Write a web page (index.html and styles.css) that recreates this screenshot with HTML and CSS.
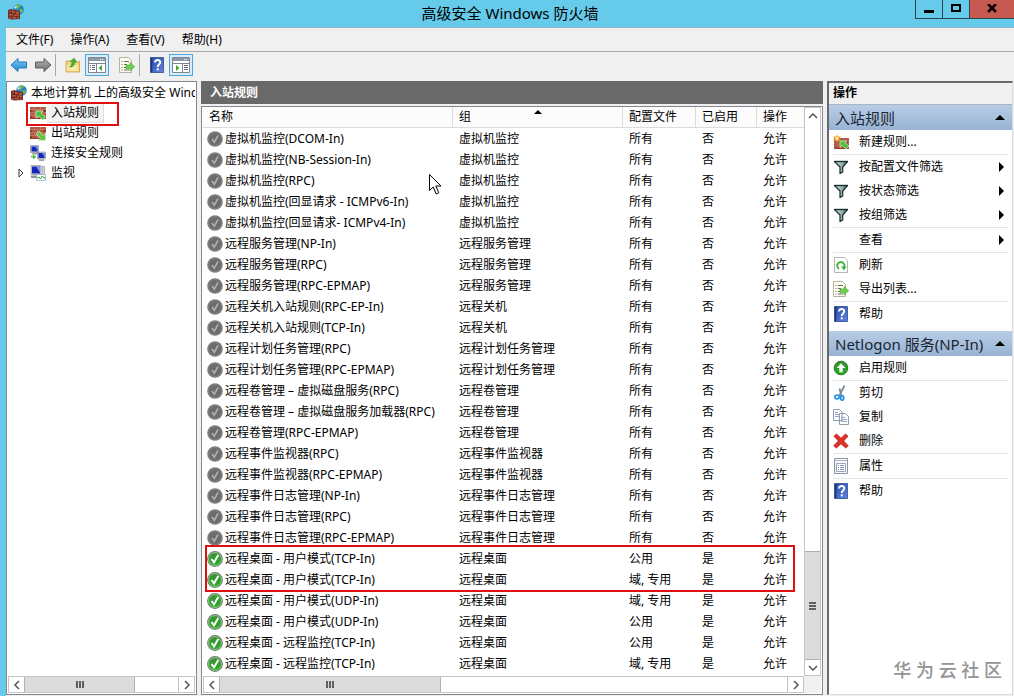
FILE: index.html
```html
<!DOCTYPE html>
<html lang="zh-CN">
<head>
  <meta charset="UTF-8" />
  <meta name="viewport" content="width=device-width, initial-scale=1" />
  <title>高级安全 Windows 防火墙</title>
  <link rel="stylesheet" href="styles.css">
</head>
<body>
  <!-- Icon sprite -->
  <svg class="sprite" aria-hidden="true">
    <defs>
      <linearGradient id="gBlue" x1="0" y1="0" x2="0" y2="1"><stop offset="0" stop-color="#7fd0f5"/><stop offset="1" stop-color="#1581cf"/></linearGradient>
      <linearGradient id="gGray" x1="0" y1="0" x2="0" y2="1"><stop offset="0" stop-color="#b5b5b5"/><stop offset="1" stop-color="#6e6e6e"/></linearGradient>
      <linearGradient id="gHelp" x1="0" y1="0" x2="1" y2="1"><stop offset="0" stop-color="#2b4aa8"/><stop offset="1" stop-color="#5f86e0"/></linearGradient>
      <linearGradient id="gGreen" x1="0" y1="0" x2="0" y2="1"><stop offset="0" stop-color="#3f8c3a"/><stop offset="1" stop-color="#22ad1c"/></linearGradient>
      <linearGradient id="gFunnel" x1="0" y1="0" x2="1" y2="0"><stop offset="0" stop-color="#e3f1f1"/><stop offset="1" stop-color="#4f7e80"/></linearGradient>
    </defs>
    <symbol id="bricks" viewBox="0 0 16 12">
      <path fill="#8f3b28" d="M0 0h16v12H0z"/>
      <path fill="#b5583f" d="M0 0h4v2H0zM5 0h5v2H5zM11 0h5v2h-5zM2 3h5v2H2zM8 3h5v2H8zM0 6h4v2H0zM5 6h5v2H5zM11 6h5v2h-5zM2 9h5v2H2zM8 9h5v2H8z"/>
      <path fill="none" stroke="#d6a595" stroke-width=".6" d="M0 2.5h16M0 5.5h16M0 8.5h16M4.5 0v2.5M10.5 0v2.5M7.5 3v2.500M4.5 6v2.500M10.5 6v2.500M7.5 9v2.500"/>
    </symbol>
    <symbol id="firewall" viewBox="0 0 16 16">
      <circle cx="10.5" cy="5.5" r="5.3" fill="#2d7fc4"/>
      <path fill="#6cc04a" d="M8 1.200c2-1 4-.7 5 .5l-2 1.500-1 2-2-1zM12 5l3 .5-1 3.500-2-1z"/>
      <path fill="#bfe6fb" d="M6 3.500l2-2 1 1.500-2 2z"/>
      <path fill="#6f2e22" d="M0 6l3-1 9 2.500V15l-9 .5-3-1z"/>
      <path fill="#b4543c" d="M1 7l2-.6V8H1zM4 6.500l3 .8V9H4zM8 7.600l3 .7V10H8zM1 10h4v1.600H1zM6 10.500h5V12H6zM1 13h2v1.500H1zM4 12.800h4v1.800H4zM9 13h2v1.400H9z"/>
    </symbol>
    <symbol id="inbound" viewBox="0 0 16 16">
      <use href="#bricks" y="2" width="16" height="12"/>
      <path fill="#4cc23a" stroke="#e6f7df" stroke-width=".7" d="M6 6h7l-2 2 4.500 4-3 3L8.500 11 6 13z"/>
    </symbol>
    <symbol id="outbound" viewBox="0 0 16 16">
      <use href="#bricks" y="2" width="16" height="12"/>
      <path fill="#63c63c" stroke="#e6f7df" stroke-width=".7" d="M15.500 15.500H8l2.300-2.300L6 9l3-3 4 4.500 2.500-2.500z"/>
    </symbol>
    <symbol id="newrule" viewBox="0 0 16 16">
      <use href="#bricks" x="1" y="4" width="15" height="11"/>
      <path fill="#4cc23a" stroke="#e6f7df" stroke-width=".6" d="M7 7h7l-2 2 4 3-3 3-3.500-3.500L7 13z"/>
      <path fill="#f7a823" d="M4 0l1 2.800L8 2 6 4.500 8 7 5 6.300 4 9 3 6.300 0 7l2-2.500L0 2l3 .8z"/>
      <circle cx="4" cy="4.5" r="1.4" fill="#fff3b0"/>
    </symbol>
    <symbol id="security" viewBox="0 0 16 16">
      <path fill="#c9cdd6" stroke="#6b7280" stroke-width=".5" d="M.5.500h8v7h-8zM7.500 7h8v7h-8z"/>
      <path fill="#1726b8" d="M1.500 1.500h6v5h-6zM8.500 8h6v5h-6z"/>
      <path fill="#6f8df2" d="M5 1.500h2.500v4zM12 8h2.500v4z"/>
      <path fill="#9aa0aa" d="M2 8h5v1.500H2zM9 14.300h5V16H9z"/>
      <path fill="#5fb944" d="M1 11h5v1.500H1zM3 9.500h1.500V14H3z"/>
    </symbol>
    <symbol id="monitor" viewBox="0 0 16 16">
      <path fill="#d5d8de" stroke="#777" stroke-width=".5" d="M1 .5h10v9H1zM12 1.500h2.500v9H12z"/>
      <path fill="#1726b8" d="M2 1.500h8v7H2z"/>
      <path fill="#7d97f5" d="M6 1.500h4v6z"/>
      <path fill="#8d929c" d="M1 10.500h7V13H1z"/>
      <path fill="#fff" stroke="#7a9cc4" stroke-width=".6" d="M6.500 9.500h9v6h-9z"/>
      <path fill="none" stroke="#35a535" d="M7 13l2-1 1.500 2 2-3 1.500 2h1.500"/>
    </symbol>
    <symbol id="back" viewBox="0 0 18 16">
      <path fill="url(#gBlue)" stroke="#2a79b5" d="M1 8l7-6.500V5h8.500v6H8v3.500z"/>
    </symbol>
    <symbol id="forward" viewBox="0 0 18 16">
      <path fill="url(#gGray)" stroke="#5c5c5c" d="M17 8l-7-6.500V5H1.500v6H10v3.500z"/>
    </symbol>
    <symbol id="folderup" viewBox="0 0 16 16">
      <path fill="#f3d37a" stroke="#c39a3c" stroke-width=".7" d="M1 4h6l1.500 1.500H12L14.500 4v11H1z"/>
      <path fill="#fbe7a6" d="M2 8h11v6H2z"/>
      <path fill="#4fae30" d="M3.500 10c1.500-.3 3-2 3.200-5H4.200L9 .8 12.500 5h-2.300c0 4-3 6-6.700 5z"/>
    </symbol>
    <symbol id="treepane" viewBox="0 0 18 16">
      <path fill="#fff" stroke="#7c8796" d="M.5.500h17v15H.5z"/>
      <path fill="#8c97a8" d="M1 1h16v3H1z"/>
      <path fill="#fff" d="M12 2h1v1h-1zM14 2h1v1h-1z"/>
      <path stroke="#7c8796" d="M.5 6.500h17M8.500 6v10"/>
      <path stroke="#5c6b80" d="M2 8.500h1M4 8.500h3M2 10.500h1M4 10.500h3M2 12.500h1M4 12.500h3"/>
      <path fill="#45a832" d="M14 8v6l-3.500-3z"/>
    </symbol>
    <symbol id="actionpane" viewBox="0 0 18 16">
      <path fill="#fff" stroke="#7c8796" d="M.5.500h17v15H.5z"/>
      <path fill="#8c97a8" d="M1 1h16v3H1z"/>
      <path fill="#fff" d="M12 2h1v1h-1zM14 2h1v1h-1z"/>
      <path stroke="#7c8796" d="M.5 6.500h17M10.500 6v10"/>
      <path stroke="#5c6b80" d="M12 8.500h4M12 10.500h4M12 12.500h4"/>
      <path fill="#45a832" d="M4 8v6l3.500-3z"/>
    </symbol>
    <symbol id="export" viewBox="0 0 16 16">
      <path fill="#fffdf0" stroke="#a2a18c" stroke-width=".8" d="M.5.500h9l3 3v12H.5z"/>
      <path stroke="#6b6b5c" d="M2.500 4.500h1M5 4.500h5M2.500 7.500h1M5 7.500h3M2.500 10.500h1M5 10.500h3M2.500 13h1M5 13h5"/>
      <path fill="#6fd04c" stroke="#3ea52b" stroke-width=".6" d="M7 8h4V5.500l4.700 4.200L11 14v-2.500H7z"/>
    </symbol>
    <symbol id="help" viewBox="0 0 14 16">
      <path fill="url(#gHelp)" stroke="#1e3a86" stroke-width=".7" d="M.5.500h13v15H.5z"/>
      <path fill="#1c367f" d="M.8.800h1.500v14.500H.8z"/>
      <path fill="none" stroke="#fff" stroke-width="1.900" d="M5 5.600C5 2.200 10.200 2.200 10.200 5.300 10.200 7.500 7.700 7.500 7.700 10"/>
      <path fill="#fff" d="M6.700 11.300h2.100v2H6.700z"/>
    </symbol>
    <symbol id="funnel" viewBox="0 0 16 16">
      <path fill="url(#gFunnel)" stroke="#172d30" stroke-width="1.200" stroke-linejoin="round" d="M1.500 2.500h13L9.700 8v5L7 14.500V8z"/>
      <path stroke="#172d30" stroke-width="1.400" d="M1 2.500h14"/>
    </symbol>
    <symbol id="refresh" viewBox="0 0 14 16">
      <path fill="#fff" stroke="#98a898" stroke-width=".8" d="M.5.500h10l3 3v12H.5z"/>
      <path fill="none" stroke="#46b23b" stroke-width="2" d="M5 11.800A3.600 3.600 0 1 1 10 10.500"/>
      <path fill="#46b23b" d="M7 9.500h5.500L10 13.500z"/>
    </symbol>
    <symbol id="enable" viewBox="0 0 16 16">
      <circle cx="8" cy="8" r="6.8" fill="url(#gGreen)" stroke="#267a22"/>
      <path fill="#fff" d="M8 3.300L12.300 8H9.700v4.300H6.300V8H3.700z"/>
    </symbol>
    <symbol id="cut" viewBox="0 0 16 16">
      <path stroke="#7b8a99" stroke-width="1.800" d="M11.500.5L6.500 10.500M6.500 3.500l2 7.500"/>
      <ellipse cx="4" cy="12" rx="2.200" ry="2" fill="#d2ecff" stroke="#1f8fe0" stroke-width="1.600"/>
      <ellipse cx="9.200" cy="13" rx="1.600" ry="2.200" fill="#d2ecff" stroke="#1f8fe0" stroke-width="1.600"/>
    </symbol>
    <symbol id="copy" viewBox="0 0 16 16">
      <path fill="#fff" stroke="#8791a3" stroke-width=".9" d="M.5.500h6L9 3v8.500H.5zM6.500 4.500h6l3 3v8h-9z"/>
      <path stroke="#8ea4c6" d="M2 3.500h3M2 5.500h4M2 7.500h4M8 8.500h4M8 10.500h6M8 12.500h6"/>
    </symbol>
    <symbol id="delete" viewBox="0 0 16 16">
      <path fill="#e4302a" stroke="#b01512" stroke-width=".8" stroke-linejoin="round" d="M1 3.200L3.500 1 8 5.300 12.500 1 15 3.200 10.600 8 15.200 12.700 12.700 15 8 10.700 3.300 15 .8 12.700 5.400 8z"/>
    </symbol>
    <symbol id="props" viewBox="0 0 16 16">
      <path fill="#f7f9fb" stroke="#8b97a6" d="M1.500.500h13v15h-13z"/>
      <path stroke="#a9b4c2" d="M2 2.500h12"/>
      <path fill="#fff" stroke="#9aa6b5" d="M3.500 5.500h9v8h-9z"/>
      <path stroke="#7f93b5" d="M5 7.500h1M7 7.500h4M5 9.500h1M7 9.500h4M5 11.500h1M7 11.500h4"/>
    </symbol>
    <symbol id="rule-on" viewBox="0 0 16 16">
      <circle cx="8" cy="8" r="7.300" fill="url(#gGreen)" stroke="#6f7f6f" stroke-width="1.200"/>
      <circle cx="8" cy="8" r="6.400" fill="none" stroke="#c8e8c2" stroke-width=".6"/>
      <path fill="none" stroke="#fff" stroke-width="2" d="M4.500 8l2.500 3.500L11.300 4"/>
    </symbol>
    <symbol id="rule-off" viewBox="0 0 16 16">
      <circle cx="8" cy="8" r="7.800" fill="#7e7e7e"/>
      <circle cx="8" cy="8" r="6" fill="#6c6c6c"/>
      <path fill="none" stroke="#b0b0b0" stroke-width="1.600" d="M5 8l2.300 3.300L11 4.500"/>
    </symbol>
    <symbol id="chev" viewBox="0 0 10 10">
      <path fill="none" stroke="#555" stroke-width="1.500" d="M7 1L3 5l4 4"/>
    </symbol>
  </svg>

  <div class="window">
    <header class="titlebar">
      <svg class="icon app-icon"><use href="#firewall"/></svg>
      <h1 class="title">高级安全 Windows 防火墙</h1>
      <div class="controls">
        <button class="control" aria-label="最小化"><svg width="10" height="9"><path d="M0 6h10v3H0z"/></svg></button>
        <button class="control" aria-label="最大化"><svg width="10" height="9"><path fill="none" stroke="#000" stroke-width="2" d="M1 1h8v6H1z"/></svg></button>
        <button class="control close" aria-label="关闭"><svg width="10" height="9"><path fill="none" stroke="#000" stroke-width="2.500" d="M1 0l8 8M9 0L1 8"/></svg></button>
      </div>
    </header>

    <nav class="menubar">
      <button>文件(F)</button>
      <button>操作(A)</button>
      <button>查看(V)</button>
      <button>帮助(H)</button>
    </nav>

    <div class="toolbar">
      <button class="tool" aria-label="后退"><svg class="wide"><use href="#back"/></svg></button>
      <button class="tool" aria-label="前进"><svg class="wide"><use href="#forward"/></svg></button>
      <span class="tool-sep"></span>
      <button class="tool" aria-label="上一级"><svg class="icon"><use href="#folderup"/></svg></button>
      <button class="tool pressed" aria-label="显示控制台树"><svg class="wide"><use href="#treepane"/></svg></button>
      <span class="tool-gap"></span>
      <button class="tool" aria-label="导出列表"><svg class="icon"><use href="#export"/></svg></button>
      <span class="tool-sep"></span>
      <button class="tool" aria-label="帮助"><svg class="icon"><use href="#help"/></svg></button>
      <button class="tool pressed" aria-label="显示操作窗格"><svg class="wide"><use href="#actionpane"/></svg></button>
    </div>

    <main class="panes">
      <!-- Console tree -->
      <section class="pane tree-pane">
        <ul class="tree">
          <li class="tree-root"><svg class="icon"><use href="#firewall"/></svg><span>本地计算机 上的高级安全 Wind</span></li>
          <li class="tree-item marked"><span class="twisty"></span><svg class="icon"><use href="#inbound"/></svg><span class="selected">入站规则</span></li>
          <li class="tree-item"><span class="twisty"></span><svg class="icon"><use href="#outbound"/></svg><span>出站规则</span></li>
          <li class="tree-item"><span class="twisty"></span><svg class="icon"><use href="#security"/></svg><span>连接安全规则</span></li>
          <li class="tree-item"><svg class="twisty" viewBox="0 0 8 10"><path fill="#fff" stroke="#333" d="M2 1l4 4-4 4z"/></svg><svg class="icon"><use href="#monitor"/></svg><span>监视</span></li>
        </ul>
        <div class="hscroll">
          <button class="scroll-btn" aria-label="向左"><svg class="chev"><use href="#chev"/></svg></button>
          <div class="hthumb tree-thumb"><i class="grip"></i></div>
          <button class="scroll-btn end" aria-label="向右"><svg class="chev right"><use href="#chev"/></svg></button>
        </div>
      </section>

      <!-- Rule list -->
      <section class="center">
        <h2 class="center-title">入站规则</h2>
        <div class="pane list-pane">
          <div class="list-body">
            <div class="list-view">
              <table class="rules" id="rules">
                <colgroup>
                  <col><col class="col-group"><col class="col-profile"><col class="col-enabled"><col class="col-action">
                </colgroup>
                <thead>
                  <tr><th>名称</th><th class="sorted">组</th><th>配置文件</th><th>已启用</th><th>操作</th></tr>
                </thead>
              </table>
            </div>
            <div class="vscroll">
              <button class="scroll-btn" aria-label="向上"><svg class="chev up"><use href="#chev"/></svg></button>
              <div class="vthumb"><i class="grip"></i></div>
              <button class="scroll-btn" aria-label="向下"><svg class="chev down"><use href="#chev"/></svg></button>
            </div>
          </div>
          <div class="list-foot">
            <div class="hscroll">
              <button class="scroll-btn" aria-label="向左"><svg class="chev"><use href="#chev"/></svg></button>
              <div class="hthumb list-thumb"><i class="grip"></i></div>
              <button class="scroll-btn end" aria-label="向右"><svg class="chev right"><use href="#chev"/></svg></button>
            </div>
            <span class="corner"></span>
          </div>
        </div>
      </section>

      <!-- Actions -->
      <aside class="pane actions">
        <h2 class="actions-title">操作</h2>
        <h3 class="group-title">入站规则<span class="collapse"></span></h3>
        <div class="group">
          <button class="action last"><svg class="icon"><use href="#newrule"/></svg>新建规则...</button>
          <button class="action sub"><svg class="icon"><use href="#funnel"/></svg>按配置文件筛选</button>
          <button class="action sub"><svg class="icon"><use href="#funnel"/></svg>按状态筛选</button>
          <button class="action sub last"><svg class="icon"><use href="#funnel"/></svg>按组筛选</button>
          <button class="action sub last"><span class="icon"></span>查看</button>
          <button class="action"><svg class="icon"><use href="#refresh"/></svg>刷新</button>
          <button class="action last"><svg class="icon"><use href="#export"/></svg>导出列表...</button>
          <button class="action"><svg class="icon"><use href="#help"/></svg>帮助</button>
        </div>
        <h3 class="group-title">Netlogon 服务(NP-In)<span class="collapse"></span></h3>
        <div class="group">
          <button class="action last"><svg class="icon"><use href="#enable"/></svg>启用规则</button>
          <button class="action"><svg class="icon"><use href="#cut"/></svg>剪切</button>
          <button class="action"><svg class="icon"><use href="#copy"/></svg>复制</button>
          <button class="action last"><svg class="icon"><use href="#delete"/></svg>删除</button>
          <button class="action last"><svg class="icon"><use href="#props"/></svg>属性</button>
          <button class="action"><svg class="icon"><use href="#help"/></svg>帮助</button>
        </div>
        <p class="watermark">华 为 云 社 区</p>
      </aside>
    </main>
  </div>

  <svg class="pointer" viewBox="0 0 13 21" aria-hidden="true">
    <path fill="#fff" stroke="#000" d="M.5.500v16l3.700-3.500 3 7 2.600-1.200-3-6.800h5.200z"/>
  </svg>

  <script src="rules.js"></script>
</body>
</html>
```
FILE: styles.css
```css
/* Reset and base */
*,
*::before,
*::after {
  box-sizing: border-box;
  margin: 0;
  padding: 0;
}
body {
  font: 12px/20px "Noto Sans", "Noto Sans CJK SC", sans-serif;
  color: #000;
  background: #66cbea;
  overflow: hidden;
}
button {
  font: inherit;
  color: inherit;
  background: none;
  border: none;
}
ul {
  list-style: none;
}
svg {
  display: block;
  flex: none;
}
.sprite {
  position: absolute;
  width: 0;
  height: 0;
}
.icon {
  width: 16px;
  height: 16px;
  flex: none;
}
.wide {
  width: 18px;
  height: 16px;
}

/* Window frame */
.window {
  display: flex;
  flex-direction: column;
  height: 100vh;
  padding-left: 6px;
}
.titlebar {
  position: relative;
  display: flex;
  align-items: center;
  justify-content: center;
  height: 27px;
  flex: none;
}
.app-icon {
  position: absolute;
  left: 2px;
  top: 4px;
}
.title {
  padding-bottom: 2px;
  font-size: 15px;
  font-weight: 400;
}
.controls {
  position: absolute;
  right: 0;
  top: 0;
  display: flex;
  height: 19px;
  border: 1px solid #2c4450;
  border-width: 0 0 1px 1px;
}
.control {
  display: flex;
  align-items: center;
  justify-content: center;
  width: 27px;
  padding-bottom: 2px;
  border-right: 1px solid #2c4450;
}
.control.close {
  width: 44px;
  background: #c75a50;
  border-right: none;
}
.menubar {
  display: flex;
  gap: 17px;
  height: 25px;
  flex: none;
  padding: 0 10px;
  background: #f0f0f0;
  border-top: 1px solid #9db3bb;
  border-bottom: 1px solid #a8a8a8;
}
.toolbar {
  display: flex;
  align-items: center;
  height: 29px;
  flex: none;
  padding-left: 1px;
  padding-bottom: 4px;
  background: #f0f0f0;
}
.tool {
  display: flex;
  align-items: center;
  justify-content: center;
  width: 24px;
  height: 22px;
}
.tool.pressed {
  background: #d9ecf9;
  border: 1px solid #4ea6dd;
}
.tool-sep {
  width: 1px;
  height: 22px;
  margin-right: 5px;
  background: #a8a8a8;
}
.tool-gap {
  width: 6px;
}

/* Panes */
.panes {
  display: flex;
  gap: 4px;
  flex: 1;
  min-height: 0;
  padding: 0 1px 1px 0;
  background: #f0f0f0;
}
.pane {
  background: #fff;
  border: 1px solid #828790;
}
.tree-pane {
  display: flex;
  flex-direction: column;
  justify-content: space-between;
  width: 191px;
  flex: none;
  padding: 1px;
}
.tree-root,
.tree-item {
  display: flex;
  align-items: center;
  gap: 4px;
  height: 20px;
  white-space: nowrap;
}
.tree-root {
  padding-left: 3px;
  overflow: hidden;
}
.tree-item {
  position: relative;
  padding-left: 9px;
}
.tree-item .icon {
  margin-left: 1px;
}
.tree-item .icon + span {
  margin-left: 1px;
}
.twisty {
  width: 8px;
  height: 10px;
}
.tree-item .icon + .selected {
  margin-left: -3px;
  padding: 0 4px;
  background: #f2f2f2;
  border: 1px solid #dedede;
  border-left: none;
  line-height: 18px;
}
.tree-item.marked::after {
  content: "";
  position: absolute;
  left: 18px;
  top: -1px;
  width: 93px;
  height: 24px;
  border: 2px solid #e01010;
}

.center {
  display: flex;
  flex-direction: column;
  flex: 1;
  min-width: 0;
}
.center-title {
  height: 23px;
  margin-bottom: 2px;
  padding-left: 9px;
  font-size: 12px;
  line-height: 23px;
  color: #fff;
  background: #696969;
}
.list-pane {
  display: flex;
  flex-direction: column;
  flex: 1;
  min-height: 0;
  padding: 0 1px 1px;
}
.list-body {
  display: flex;
  flex: 1;
  min-height: 0;
}
.list-view {
  flex: 1;
  min-width: 0;
  overflow: hidden;
}

/* Rule table */
.rules {
  width: 100%;
  border-collapse: separate;
  border-spacing: 0;
  table-layout: fixed;
}
.col-group {
  width: 170px;
}
.col-profile {
  width: 73px;
}
.col-enabled {
  width: 61px;
}
.col-action {
  width: 47px;
}
.rules th {
  position: relative;
  height: 21px;
  padding-left: 6px;
  font-weight: 400;
  line-height: 20px;
  text-align: left;
  background: #fcfcfc;
  border-right: 1px solid #dcdcdc;
  border-bottom: 1px solid #dcdcdc;
}
.rules th:last-child {
  border-right: none;
}
.sorted::after {
  content: "";
  position: absolute;
  left: 50%;
  top: 3px;
  margin-left: -4px;
  border: 4px solid transparent;
  border-top: none;
  border-bottom-color: #000;
}
.rules td {
  height: 21px;
  padding-left: 6px;
  white-space: nowrap;
}
.rules td:first-child {
  padding-left: 4px;
}
.rule-name {
  display: flex;
  align-items: center;
  gap: 2px;
}
.rules tbody.marked {
  position: relative;
}
.rules tbody.marked::after {
  content: "";
  position: absolute;
  inset: -3px 9px -2px 2px;
  border: 2px solid #e01010;
}

/* Scroll bars */
.hscroll {
  display: flex;
  flex: 1;
  height: 17px;
  border: 1px solid #c4c4c4;
}
.tree-pane .hscroll {
  flex: none;
}
.vscroll {
  display: flex;
  flex-direction: column;
  width: 17px;
  border: 1px solid #c4c4c4;
}
.scroll-btn {
  display: flex;
  align-items: center;
  justify-content: center;
  width: 15px;
  height: 15px;
  flex: none;
}
.scroll-btn.end {
  width: 16px;
  margin-left: auto;
  border-left: 1px solid #c4c4c4;
}
.chev {
  width: 10px;
  height: 10px;
}
.chev.right {
  transform: rotate(180deg);
}
.chev.up {
  transform: rotate(90deg);
}
.chev.down {
  transform: rotate(-90deg);
}
.hthumb,
.vthumb {
  display: flex;
  align-items: center;
  justify-content: center;
  background: #dcdcdc;
  border: 1px solid #b0b0b0;
}
.hthumb {
  border-width: 0 1px;
}
.vthumb {
  height: 109px;
  margin-top: auto;
  border-width: 1px 0;
}
.tree-thumb {
  width: 60%;
}
.list-thumb {
  width: 37%;
}
.grip {
  width: 8px;
  height: 7px;
  background: repeating-linear-gradient(90deg, #606060 0 2px, transparent 2px 3px);
}
.vthumb .grip {
  width: 7px;
  height: 8px;
  background: repeating-linear-gradient(#606060 0 2px, transparent 2px 3px);
}
.list-foot {
  display: flex;
}
.corner {
  width: 17px;
  background: #f0f0f0;
}

/* Actions pane */
.actions {
  display: flex;
  flex-direction: column;
  width: 186px;
  flex: none;
  border-width: 2px 1px 1px 2px;
  border-color: #696969 #dcdcdc #dcdcdc #696969;
}
.actions-title {
  height: 22px;
  padding-left: 4px;
  font-size: 12px;
  background: #f0f0f0;
  border-bottom: 1px solid #a8b4c4;
}
.group-title {
  display: flex;
  align-items: center;
  justify-content: space-between;
  height: 25px;
  padding: 0 7px 0 6px;
  font-size: 15px;
  font-weight: 400;
  white-space: nowrap;
  color: #1b2733;
  background: linear-gradient(#b8cde6, #98b3d3);
}
.collapse {
  border: 5px solid transparent;
  border-top: none;
  border-bottom-color: #000;
}
.group {
  padding: 0 4px 5px;
}
.action {
  display: flex;
  align-items: center;
  gap: 10px;
  width: 100%;
  height: 24px;
  text-align: left;
}
.action.last {
  height: 25px;
  border-bottom: 1px solid #e3e6ea;
}
.action.sub::after {
  content: "";
  margin-left: auto;
  margin-right: 4px;
  border: 5px solid transparent;
  border-right: none;
  border-left-color: #000;
}
.watermark {
  margin-top: auto;
  padding: 0 10px 12px;
  font-size: 18px;
  font-weight: 500;
  line-height: 24px;
  text-align: right;
  white-space: nowrap;
  color: #949494;
}

/* Mouse pointer */
.pointer {
  position: absolute;
  left: 429px;
  top: 174px;
  width: 13px;
  height: 21px;
}
```
FILE: rules.js
```js
(() => {
  // name, group, profile, enabled
  const rules = [
    ['虚拟机监控(DCOM-In)', '虚拟机监控', '所有', false],
    ['虚拟机监控(NB-Session-In)', '虚拟机监控', '所有', false],
    ['虚拟机监控(RPC)', '虚拟机监控', '所有', false],
    ['虚拟机监控(回显请求 - ICMPv6-In)', '虚拟机监控', '所有', false],
    ['虚拟机监控(回显请求- ICMPv4-In)', '虚拟机监控', '所有', false],
    ['远程服务管理(NP-In)', '远程服务管理', '所有', false],
    ['远程服务管理(RPC)', '远程服务管理', '所有', false],
    ['远程服务管理(RPC-EPMAP)', '远程服务管理', '所有', false],
    ['远程关机入站规则(RPC-EP-In)', '远程关机', '所有', false],
    ['远程关机入站规则(TCP-In)', '远程关机', '所有', false],
    ['远程计划任务管理(RPC)', '远程计划任务管理', '所有', false],
    ['远程计划任务管理(RPC-EPMAP)', '远程计划任务管理', '所有', false],
    ['远程卷管理 – 虚拟磁盘服务(RPC)', '远程卷管理', '所有', false],
    ['远程卷管理 – 虚拟磁盘服务加载器(RPC)', '远程卷管理', '所有', false],
    ['远程卷管理(RPC-EPMAP)', '远程卷管理', '所有', false],
    ['远程事件监视器(RPC)', '远程事件监视器', '所有', false],
    ['远程事件监视器(RPC-EPMAP)', '远程事件监视器', '所有', false],
    ['远程事件日志管理(NP-In)', '远程事件日志管理', '所有', false],
    ['远程事件日志管理(RPC)', '远程事件日志管理', '所有', false],
    ['远程事件日志管理(RPC-EPMAP)', '远程事件日志管理', '所有', false],
    ['远程桌面 - 用户模式(TCP-In)', '远程桌面', '公用', true],
    ['远程桌面 - 用户模式(TCP-In)', '远程桌面', '域, 专用', true],
    ['远程桌面 - 用户模式(UDP-In)', '远程桌面', '域, 专用', true],
    ['远程桌面 - 用户模式(UDP-In)', '远程桌面', '公用', true],
    ['远程桌面 - 远程监控(TCP-In)', '远程桌面', '公用', true],
    ['远程桌面 - 远程监控(TCP-In)', '远程桌面', '域, 专用', true]
  ];

  const table = document.getElementById('rules');

  /**
   * Add a block of rules to the table.
   * @param {Array} list - The rules to show.
   * @param {boolean} marked - Draw a red frame round the block.
   */
  function addRules(list, marked) {
    const body = document.createElement('tbody');
    if (marked) body.className = 'marked';
    body.innerHTML = list.map(([name, group, profile, enabled]) => `
      <tr>
        <td><span class="rule-name"><svg class="icon"><use href="#rule-${enabled ? 'on' : 'off'}"/></svg>${name}</span></td>
        <td>${group}</td>
        <td>${profile}</td>
        <td>${enabled ? '是' : '否'}</td>
        <td>允许</td>
      </tr>`).join('');
    table.appendChild(body);
  }

  addRules(rules.slice(0, 20), false);
  addRules(rules.slice(20, 22), true);
  addRules(rules.slice(22), false);
})();
```
